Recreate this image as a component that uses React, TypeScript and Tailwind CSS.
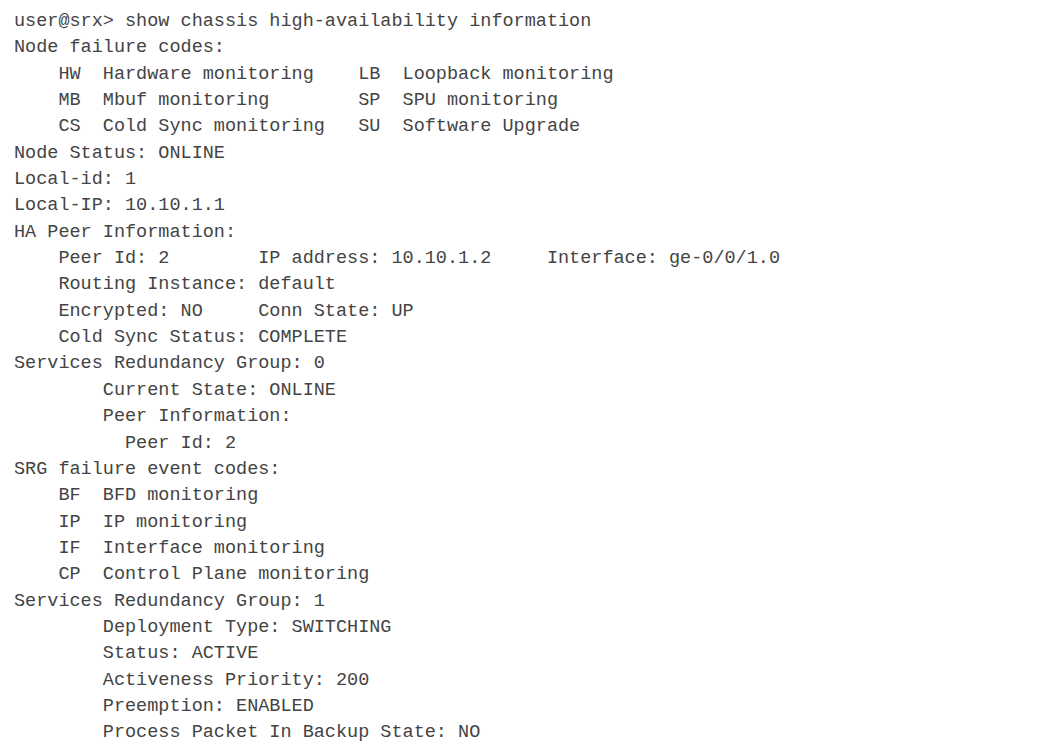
import React from 'react';

const output = `user@srx> show chassis high-availability information
Node failure codes:
    HW  Hardware monitoring    LB  Loopback monitoring
    MB  Mbuf monitoring        SP  SPU monitoring
    CS  Cold Sync monitoring   SU  Software Upgrade
Node Status: ONLINE
Local-id: 1
Local-IP: 10.10.1.1
HA Peer Information:
    Peer Id: 2        IP address: 10.10.1.2     Interface: ge-0/0/1.0
    Routing Instance: default
    Encrypted: NO     Conn State: UP
    Cold Sync Status: COMPLETE
Services Redundancy Group: 0
        Current State: ONLINE
        Peer Information:
          Peer Id: 2
SRG failure event codes:
    BF  BFD monitoring
    IP  IP monitoring
    IF  Interface monitoring
    CP  Control Plane monitoring
Services Redundancy Group: 1
        Deployment Type: SWITCHING
        Status: ACTIVE
        Activeness Priority: 200
        Preemption: ENABLED
        Process Packet In Backup State: NO`;

const App: React.FC = () => {
  return (
    <div className="w-[1061px] h-[744px] bg-white overflow-hidden">
      <pre className="pl-[14px] pt-[9px] text-[18.5px] leading-[26.34px] text-[#444] font-['Liberation_Mono',monospace] whitespace-pre">
        {output}
      </pre>
    </div>
  );
};

export default App;
